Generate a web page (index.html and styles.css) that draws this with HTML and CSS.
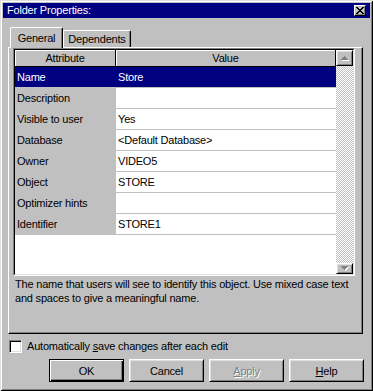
FILE: index.html
```html
<!DOCTYPE html>
<html>
<head>
<meta charset="utf-8">
<title>Folder Properties</title>
<link rel="stylesheet" href="styles.css">
</head>
<body>
<div class="window">
  <div class="titlebar">
    <span class="title">Folder Properties:</span>
    <span class="close"><svg width="8" height="7" viewBox="0 0 8 7"><path d="M0 0h2v1H0zM6 0h2v1H6zM1 1h2v1H1zM5 1h2v1H5zM2 2h4v1H2zM3 3h2v1H3zM2 4h4v1H2zM1 5h2v1H1zM5 5h2v1H5zM0 6h2v1H0zM6 6h2v1H6z" fill="#000"/></svg></span>
  </div>

  <div class="tabstrip">
    <div class="tab active">General</div>
    <div class="tab inactive">Dependents</div>
  </div>

  <div class="panel">
    <div class="grid-frame">
      <div class="grid-inner">
        <div class="table">
          <div class="hrow">
            <div class="hcell attr">Attribute</div>
            <div class="hcell val">Value</div>
          </div>
          <div class="row sel"><div class="cell attr">Name</div><div class="cell val">Store</div></div>
          <div class="row"><div class="cell attr">Description</div><div class="cell val"></div></div>
          <div class="row"><div class="cell attr">Visible to user</div><div class="cell val">Yes</div></div>
          <div class="row"><div class="cell attr">Database</div><div class="cell val">&lt;Default Database&gt;</div></div>
          <div class="row"><div class="cell attr">Owner</div><div class="cell val">VIDEO5</div></div>
          <div class="row"><div class="cell attr">Object</div><div class="cell val">STORE</div></div>
          <div class="row"><div class="cell attr">Optimizer hints</div><div class="cell val"></div></div>
          <div class="row"><div class="cell attr">Identifier</div><div class="cell val">STORE1</div></div>
        </div>
        <div class="vscroll">
          <div class="sbtn up"><svg width="9" height="6" viewBox="0 0 9 6"><path d="M4 1h1v1H4zM3 2h3v1H3zM2 3h5v1H2zM1 4h7v1H1z" fill="#fff" transform="translate(1 1)"/><path d="M4 1h1v1H4zM3 2h3v1H3zM2 3h5v1H2zM1 4h7v1H1z" fill="#808080"/></svg></div>
          <div class="track"></div>
          <div class="sbtn down"><svg width="9" height="6" viewBox="0 0 9 6"><path d="M1 0h7v1H1zM2 1h5v1H2zM3 2h3v1H3zM4 3h1v1H4z" fill="#fff" transform="translate(1 1)"/><path d="M1 0h7v1H1zM2 1h5v1H2zM3 2h3v1H3zM4 3h1v1H4z" fill="#808080"/></svg></div>
        </div>
      </div>
    </div>
    <p class="desc">The name that users will see to identify this object. Use mixed case text and spaces to give a meaningful name.</p>
  </div>

  <label class="check-row">
    <span class="checkbox"></span>
    <span class="check-label">Automatically <u>s</u>ave changes after each edit</span>
  </label>

  <div class="buttons">
    <div class="btn default">OK</div>
    <div class="btn">Cancel</div>
    <div class="btn disabled"><span><u>A</u>pply</span></div>
    <div class="btn"><span><u>H</u>elp</span></div>
  </div>
</div>
</body>
</html>
```

FILE: styles.css
```css
* {
  box-sizing: border-box;
}

html,
body {
  margin: 0;
  padding: 0;
}

body {
  width: 373px;
  height: 391px;
  overflow: hidden;
  background: #c0c0c0;
  font-family: "Liberation Sans", Arial, sans-serif;
  font-size: 11px;
  letter-spacing: -0.2px;
  color: #000;
}

.window {
  width: 373px;
  height: 391px;
  padding: 3px;
  background: #c0c0c0;
  box-shadow: inset 1px 1px #dfdfdf, inset -1px -1px #000, inset 2px 2px #fff, inset -2px -2px #808080;
  display: flex;
  flex-direction: column;
}

.titlebar {
  height: 15px;
  flex: none;
  background: #000080;
  color: #fff;
  display: flex;
  align-items: center;
  justify-content: space-between;
  padding: 0 4px 0 4px;
}

.title {
  line-height: 15px;
}

.close {
  width: 12px;
  height: 11px;
  background: #c0c0c0;
  border: 1px solid;
  border-color: #fff #000 #000 #fff;
  box-shadow: inset -1px -1px #808080;
  display: flex;
  align-items: center;
  justify-content: center;
}

.close svg {
  display: block;
}

.tabstrip {
  flex: none;
  margin: 9px 0 0 5px;
  height: 20px;
  display: flex;
  align-items: flex-end;
  padding-left: 2px;
}

.tab {
  background: #c0c0c0;
  border-top: 1px solid #fff;
  border-left: 1px solid #fff;
  border-right: 1px solid #000;
  border-radius: 2px 2px 0 0;
  box-shadow: inset -1px 0 #808080;
  display: flex;
  align-items: center;
  justify-content: center;
}

.tab.active {
  width: 53px;
  height: 21px;
  margin-bottom: -1px;
  position: relative;
  z-index: 1;
  padding-bottom: 1px;
}

.tab.inactive {
  width: 68px;
  height: 17px;
}

.panel {
  flex: none;
  margin-left: 5px;
  width: 355px;
  height: 287px;
  border: 1px solid;
  border-color: #fff #000 #000 #fff;
  box-shadow: inset -1px -1px #808080;
  padding: 0 7px 0 4px;
}

.grid-frame {
  width: 342px;
  height: 228px;
  border: 1px solid;
  border-color: #808080 #fff #fff #808080;
}

.grid-inner {
  height: 226px;
  border: 1px solid;
  border-color: #000 #dfdfdf #dfdfdf #000;
  background: #fff;
  display: flex;
  overflow: hidden;
}

.table {
  flex: 1;
  min-width: 0;
}

.hrow {
  display: flex;
  height: 17px;
}

.hcell {
  background: #c0c0c0;
  border-right: 1px solid #000;
  border-bottom: 1px solid #000;
  box-shadow: inset 1px 1px #fff;
  text-align: center;
  line-height: 16px;
}

.hcell.attr {
  width: 101px;
}

.hcell.val {
  flex: 1;
}

.row {
  display: flex;
  height: 21px;
}

.cell {
  height: 21px;
  border-bottom: 1px solid #c0c0c0;
  padding-left: 2px;
  line-height: 20px;
  white-space: nowrap;
  overflow: hidden;
}

.cell.attr {
  width: 101px;
  background: #c0c0c0;
}

.cell.val {
  flex: 1;
}

.row.sel .cell {
  background: #000080;
  color: #fff;
}

.vscroll {
  width: 17px;
  flex: none;
  display: flex;
  flex-direction: column;
}

.sbtn {
  flex: none;
  background: #c0c0c0;
  border: 1px solid;
  border-color: #fff #000 #000 #fff;
  box-shadow: inset 1px 1px #dfdfdf, inset -1px -1px #808080;
  display: flex;
  align-items: center;
  justify-content: center;
}

.sbtn svg {
  display: block;
}

.sbtn.up {
  height: 16px;
}

.sbtn.down {
  height: 11px;
}

.track {
  flex: 1;
  background-color: #fff;
  background-image: conic-gradient(#c0c0c0 25%, #fff 0 50%, #c0c0c0 0 75%, #fff 0);
  background-size: 2px 2px;
}

.desc {
  margin: 0;
  padding: 1px 0 0 2px;
  line-height: 14px;
}

.check-row {
  flex: none;
  display: flex;
  align-items: center;
  height: 13px;
  margin: 6px 0 0 6px;
}

.checkbox {
  width: 13px;
  height: 13px;
  background: #fff;
  border: 1px solid;
  border-color: #808080 #fff #fff #808080;
  box-shadow: inset 1px 1px #000, inset -1px -1px #dfdfdf;
}

.check-label {
  margin-left: 5px;
  line-height: 13px;
}

.buttons {
  flex: none;
  display: flex;
  justify-content: flex-end;
  gap: 5px;
  margin-top: 6px;
  padding-right: 6px;
}

.btn {
  width: 75px;
  height: 23px;
  background: #c0c0c0;
  border: 1px solid;
  border-color: #fff #000 #000 #fff;
  box-shadow: inset 1px 1px #dfdfdf, inset -1px -1px #808080;
  display: flex;
  align-items: center;
  justify-content: center;
}

.btn.default {
  border-color: #000;
  box-shadow: inset 1px 1px #fff, inset -1px -1px #000, inset -2px -2px #808080;
}

.btn.disabled {
  color: #808080;
  text-shadow: 1px 1px #fff;
}
```
